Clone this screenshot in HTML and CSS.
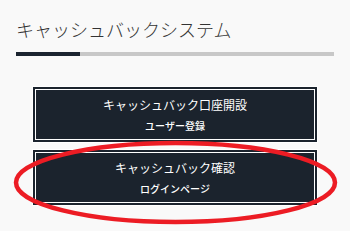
FILE: index.html
```html
<!DOCTYPE html>
<html lang="ja">
<head>
    <meta charset="UTF-8">
    <meta name="viewport" content="width=device-width, initial-scale=1.0">
    <title>キャッシュバックシステム</title>
    <link rel="stylesheet" href="styles.css">
</head>
<body>
    <section class="panel">
        <h2 class="panel-title">キャッシュバックシステム</h2>
        <div class="title-bar"><span class="title-bar-fill"></span></div>

        <div class="menu">
            <a class="menu-button" href="#">
                <span class="menu-main">キャッシュバック口座開設</span>
                <span class="menu-sub">ユーザー登録</span>
            </a>
            <a class="menu-button" href="#">
                <span class="menu-main">キャッシュバック確認</span>
                <span class="menu-sub">ログインページ</span>
            </a>
        </div>
    </section>

    <!-- red marker drawn over the second button -->
    <svg class="marker" width="350" height="231" viewBox="0 0 350 231">
        <ellipse cx="175.5" cy="182.5" rx="159.5" ry="39.5" fill="none" stroke="#ec1c24" stroke-width="4.5"/>
    </svg>
</body>
</html>
```

FILE: styles.css
```css
body {
    margin: 0;
    background-color: #f9f9f9;
    font-family: "Noto Sans CJK JP", "Noto Sans", sans-serif;
    position: relative;
    height: 231px;
    overflow: hidden;
}

.panel {
    padding: 16px 16px 0 16px;
}

.panel-title {
    margin: 0;
    font-size: 18px;
    line-height: 26px;
    font-weight: 300;
    color: #333;
}

.title-bar {
    margin-top: 10px;
    height: 4px;
    background-color: #c8c8c8;
}

.title-bar-fill {
    display: block;
    width: 64px;
    height: 4px;
    background-color: #1b2430;
}

.menu {
    margin: 30px 16px 0 16px;
    display: flex;
    flex-direction: column;
    gap: 6px;
}

.menu-button {
    display: block;
    box-sizing: border-box;
    height: 57px;
    padding-top: 10px;
    background-color: #1b232d;
    border: 1px solid #fff;
    box-shadow: inset 0 0 0 2px #1b232d, inset 0 0 0 3px #fff;
    color: #fff;
    text-decoration: none;
    text-align: center;
}

.menu-main {
    display: block;
    font-size: 12px;
    line-height: 16px;
}

.menu-sub {
    display: block;
    margin-top: 6px;
    font-size: 10px;
    line-height: 14px;
    font-weight: 500;
}

.marker {
    position: absolute;
    left: 0;
    top: 0;
    pointer-events: none;
}
```
